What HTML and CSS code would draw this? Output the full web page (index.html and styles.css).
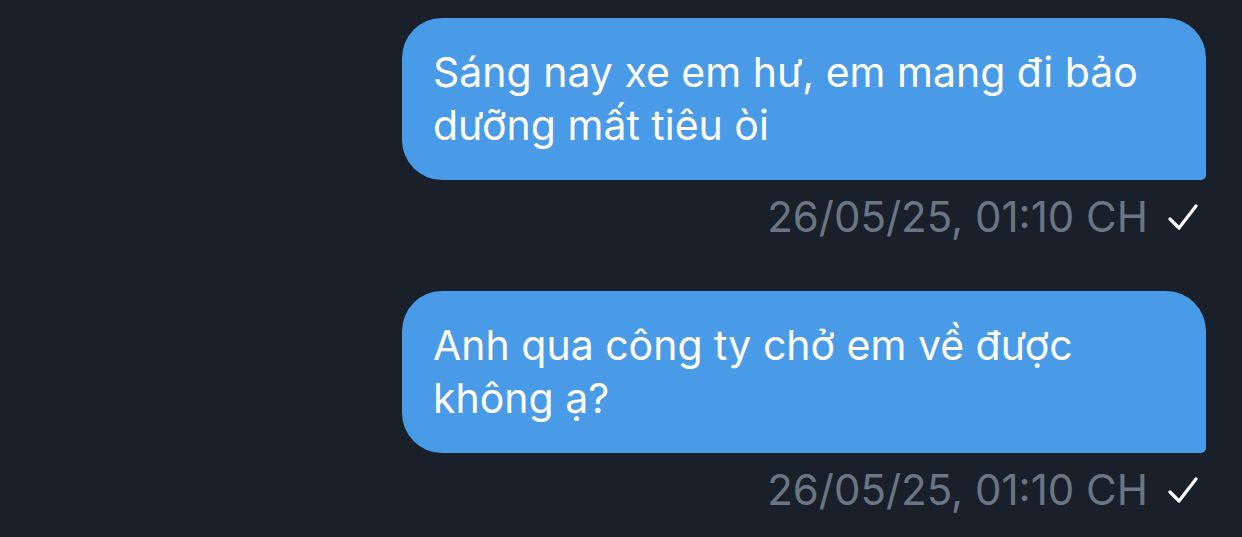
FILE: index.html
```
<!DOCTYPE html>
<html lang="vi">
<head>
    <meta charset="utf-8">
    <title>Chat</title>
    <link rel="stylesheet" href="styles.css">
</head>
<body>
    <div class="chat">
        <div class="message">
            <div class="bubble">Sáng nay xe em hư, em mang đi bảo dưỡng mất tiêu òi</div>
            <div class="meta">
                <span class="time">26/05/25, 01:10 CH</span>
                <svg class="check" width="30" height="28" viewBox="0 0 30 28">
                    <path d="M2 16 L11 25 L28 3" fill="none" stroke="#fff" stroke-width="3.2" stroke-linecap="round" stroke-linejoin="round"/>
                </svg>
            </div>
        </div>

        <div class="message">
            <div class="bubble">Anh qua công ty chở em về được không ạ?</div>
            <div class="meta">
                <span class="time">26/05/25, 01:10 CH</span>
                <svg class="check" width="30" height="28" viewBox="0 0 30 28">
                    <path d="M2 16 L11 25 L28 3" fill="none" stroke="#fff" stroke-width="3.2" stroke-linecap="round" stroke-linejoin="round"/>
                </svg>
            </div>
        </div>
    </div>
</body>
</html>
```

FILE: styles.css
```
html, body {
    margin: 0;
    height: 100%;
}

body {
    background-color: #19202a;
    font-family: Inter, "Noto Sans", sans-serif;
    color: #FFFFFF;
    overflow: hidden;
}

.chat {
    display: flex;
    flex-direction: column;
    align-items: flex-end;
    gap: 50px;
    padding: 18px 36px 0 0;
}

.message {
    display: flex;
    flex-direction: column;
    align-items: flex-end;
}

.bubble {
    box-sizing: border-box;
    width: 804px;
    padding: 28px 31px 28px;
    background-color: #4a9be7;
    border-radius: 40px 40px 5px 40px;
    font-size: 41px;
    line-height: 53px;
}

.meta {
    display: flex;
    align-items: center;
    gap: 20px;
    margin-top: 13px;
    padding-right: 8px;
}

.time {
    color: #6b7685;
    font-size: 42px;
    line-height: 48px;
}

.check {
    display: block;
}
```
